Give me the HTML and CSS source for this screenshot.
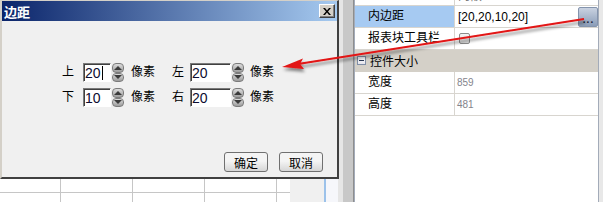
FILE: index.html
```html
<!DOCTYPE html>
<html lang="zh-CN">
<head>
    <meta charset="UTF-8">
    <title>边距</title>
    <link rel="stylesheet" href="styles.css">
</head>
<body>
    <div class="screen">
        <div class="workspace">
            <div class="canvas">
                <div class="sheet">
                    <span></span><span></span><span></span><span></span><span></span>
                    <span></span><span></span><span></span><span></span><span></span>
                    <span></span><span></span><span></span><span></span><span></span>
                </div>
                <div class="page-gap"></div>
                <div class="page-edge"></div>
            </div>
            <div class="splitter">
                <div class="splitter-light"></div>
                <div class="splitter-dark"></div>
            </div>
            <div class="props">
                <div class="prop-row first">
                    <div class="prop-name">布局</div>
                    <div class="prop-value muted">内嵌</div>
                </div>
                <div class="prop-row">
                    <div class="prop-name selected">内边距</div>
                    <div class="prop-value editing">
                        <span class="value-text">[20,20,10,20]</span>
                        <button class="ellipsis">...</button>
                    </div>
                </div>
                <div class="prop-row">
                    <div class="prop-name">报表块工具栏</div>
                    <div class="prop-value"><span class="checkbox"></span></div>
                </div>
                <div class="prop-category">
                    <span class="toggle"></span>控件大小
                </div>
                <div class="prop-row">
                    <div class="prop-name">宽度</div>
                    <div class="prop-value number">859</div>
                </div>
                <div class="prop-row">
                    <div class="prop-name">高度</div>
                    <div class="prop-value number">481</div>
                </div>
            </div>
            <div class="window-edge"></div>
        </div>

        <div class="dialog">
            <div class="titlebar">
                <span class="title">边距</span>
                <button class="close">
                    <svg width="8" height="7" viewBox="0 0 8 7">
                        <path d="M0 0h2l2 2.5L6 0h2L5 3.5 8 7H6L4 4.5 2 7H0l3-3.5z" fill="#000"/>
                    </svg>
                </button>
            </div>
            <div class="dialog-body">
                <div class="margins">
                    <label>上</label>
                    <div class="spin"><span class="spin-value">20<i class="caret"></i></span><span class="spin-btns"><b class="up"></b><b class="down"></b></span></div>
                    <span class="unit">像素</span>
                    <label>左</label>
                    <div class="spin wide"><span class="spin-value">20</span><span class="spin-btns"><b class="up"></b><b class="down"></b></span></div>
                    <span class="unit">像素</span>

                    <label>下</label>
                    <div class="spin"><span class="spin-value">10</span><span class="spin-btns"><b class="up"></b><b class="down"></b></span></div>
                    <span class="unit">像素</span>
                    <label>右</label>
                    <div class="spin wide"><span class="spin-value">20</span><span class="spin-btns"><b class="up"></b><b class="down"></b></span></div>
                    <span class="unit">像素</span>
                </div>
                <div class="dialog-buttons">
                    <button class="btn">确定</button>
                    <button class="btn">取消</button>
                </div>
            </div>
        </div>

        <svg class="arrow" width="603" height="202" viewBox="0 0 603 202">
            <defs>
                <filter id="shadow" x="-10%" y="-50%" width="120%" height="200%">
                    <feDropShadow dx="1" dy="3" stdDeviation="1.6" flood-color="#000" flood-opacity="0.45"/>
                </filter>
            </defs>
            <g filter="url(#shadow)">
                <line x1="584" y1="19" x2="298" y2="64" stroke="#e21414" stroke-width="2"/>
                <polygon points="282,67 303,58.5 300,64 304,69" fill="#e21414"/>
            </g>
        </svg>
    </div>
</body>
</html>
```

FILE: styles.css
```css
* {
    box-sizing: border-box;
}
body {
    margin: 0;
    font-family: "Liberation Sans", "Noto Sans CJK SC", sans-serif;
    font-size: 12px;
    color: #000;
}
.screen {
    position: relative;
    width: 603px;
    height: 202px;
    overflow: hidden;
    background: #f0f0f0;
}
.workspace {
    display: flex;
    height: 202px;
}

/* report canvas behind the dialog */
.canvas {
    display: flex;
    width: 338px;
    background: #f0f0f0;
}
.sheet {
    width: 290px;
    background: #fff;
    display: grid;
    grid-template-columns: 61px 72px 72px 72px 13px;
    grid-auto-rows: 20px;
    align-content: start;
    padding-top: 153px;
}
.sheet span {
    border-right: 1px solid #c6c6c6;
    border-bottom: 1px solid #c6c6c6;
}
.sheet span:nth-child(5n) {
    border-right: none;
}
.page-gap {
    width: 34px;
    background: #f0f0f0;
}
.page-edge {
    width: 14px;
    border-left: 2px solid #9cc2ea;
    background: #f6f7fb;
}

.splitter {
    display: flex;
    width: 16px;
}
.splitter-light {
    width: 5px;
    background: #e6e6e6;
}
.splitter-dark {
    flex: 1;
    background: #c8c8c8;
    border-right: 1px solid #8e8e8e;
}

/* property grid */
.props {
    width: 245px;
    background: #fff;
    border-left: 1px solid #a3abb9;
    border-right: 1px solid #a3abb9;
}
.window-edge {
    flex: 1;
    background: #e8e8e8;
}
.prop-row {
    display: grid;
    grid-template-columns: 100px 1fr;
    height: 22px;
    border-bottom: 1px solid #d8d5cf;
}
.prop-row.first {
    margin-top: -16px;
}
.prop-name {
    padding-left: 13px;
    border-right: 1px solid #d8d5cf;
    line-height: 21px;
}
.prop-name.selected {
    background: #a6caf2;
}
.prop-value {
    display: flex;
    align-items: center;
    padding-left: 3px;
}
.prop-value.muted {
    color: #777;
}
.prop-value.number {
    font-size: 10px;
    color: #84848c;
    padding-left: 2px;
}
.value-text {
    flex: 1;
}
.ellipsis {
    width: 20px;
    height: 20px;
    margin: 0;
    padding: 0 0 0 1px;
    align-self: flex-start;
    margin-top: 1px;
    border: 1px solid #8494ad;
    border-radius: 2px;
    background: linear-gradient(#c9d2e1, #8b9db8);
    font-family: "Liberation Sans", sans-serif;
    font-size: 10px;
    font-weight: bold;
    line-height: 24px;
    letter-spacing: 1px;
    color: #1c2538;
}
.checkbox {
    width: 11px;
    height: 11px;
    margin-left: 1px;
    border: 1px solid #8c8c8c;
    border-radius: 2px;
    background: linear-gradient(#f4f4f4, #dedede);
}
.prop-category {
    display: flex;
    align-items: center;
    height: 22px;
    padding-left: 2px;
    background: #d4d0c8;
    border-bottom: 1px solid #d4d0c8;
}
.toggle {
    width: 9px;
    height: 9px;
    margin-right: 4px;
    border: 1px solid #7f8ea6;
    background: linear-gradient(#fff, #e4e4ec) ;
    display: flex;
    align-items: center;
    justify-content: center;
}
.toggle::after {
    content: "";
    width: 5px;
    height: 1px;
    background: #2b3a55;
}

/* dialog */
.dialog {
    position: absolute;
    left: 0;
    top: 0;
    width: 339px;
    height: 179px;
    display: flex;
    flex-direction: column;
    background: #f0f0f0;
    border-style: solid;
    border-width: 1px 2px 2px 2px;
    border-color: #d4d0c8 #404040 #404040 #d4d0c8;
}
.titlebar {
    display: flex;
    align-items: center;
    justify-content: space-between;
    height: 20px;
    padding: 0 2px 0 2px;
    background: linear-gradient(to right, #0a246a, #a6caf0);
}
.title {
    color: #fff;
    font-weight: bold;
    font-size: 13px;
}
.close {
    width: 16px;
    height: 14px;
    padding: 0;
    display: flex;
    align-items: center;
    justify-content: center;
    background: #d4d0c8;
    border: 1px solid;
    border-color: #fff #404040 #404040 #fff;
    box-shadow: inset -1px -1px #808080;
}
.dialog-body {
    flex: 1;
    display: flex;
    flex-direction: column;
}
.margins {
    display: grid;
    grid-template-columns: 21px 48px 41px 18px 60px auto;
    grid-auto-rows: 19px;
    row-gap: 6px;
    align-items: center;
    padding: 42px 0 0 60px;
}
.margins label,
.unit {
    line-height: 19px;
}
.spin {
    display: flex;
    width: 41px;
    height: 19px;
}
.spin.wide {
    width: 54px;
}
.spin-value {
    flex: 1;
    display: flex;
    align-items: center;
    padding-left: 1px;
    background: #fff;
    border: 1px solid;
    border-color: #7a7a7a #fff #fff #7a7a7a;
    box-shadow: inset 1px 1px #404040;
    font-size: 14px;
    color: #0c0c30;
}
.caret {
    width: 1px;
    height: 14px;
    margin-left: 1px;
    background: #000;
}
.spin-btns {
    display: flex;
    flex-direction: column;
    width: 12px;
    margin-left: 1px;
}
.spin-btns b {
    flex: 1;
    display: flex;
    align-items: center;
    justify-content: center;
    border: 1px solid #7c7c7c;
    border-radius: 4px;
    background: linear-gradient(#dcdcdc, #9c9c9c);
}
.spin-btns b::after {
    content: "";
    border-left: 4px solid transparent;
    border-right: 4px solid transparent;
}
.spin-btns .up::after {
    border-bottom: 4px solid #3a3a3a;
}
.spin-btns .down::after {
    border-top: 4px solid #3a3a3a;
}
.dialog-buttons {
    margin-top: auto;
    display: flex;
    justify-content: flex-end;
    gap: 11px;
    padding: 0 14px 5px 0;
}
.btn {
    width: 44px;
    height: 20px;
    padding: 0;
    border: 1px solid #707070;
    border-radius: 3px;
    background: linear-gradient(#f4f4f4 45%, #d6d6d6);
    font-family: "Noto Sans CJK SC", sans-serif;
    font-size: 12px;
    color: #000;
}

.arrow {
    position: absolute;
    left: 0;
    top: 0;
    pointer-events: none;
}
```
